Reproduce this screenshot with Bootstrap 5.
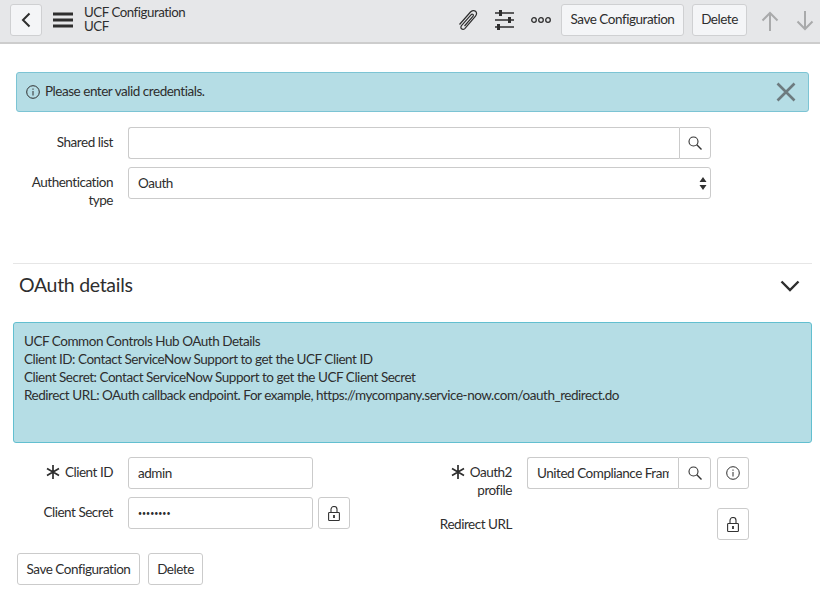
<!DOCTYPE html>
<html lang="en">
<head>
<meta charset="utf-8">
<title>UCF Configuration</title>
<link href="https://cdn.jsdelivr.net/npm/bootstrap@5.3.0/dist/css/bootstrap.min.css" rel="stylesheet">
<style>
html,body{height:593px;overflow:hidden}
body{font-family:"Lato","Liberation Sans",sans-serif;font-size:13.5px;letter-spacing:-.47px;line-height:18px;color:#2e2e2e;background:#fff}
button,input,select{letter-spacing:inherit}
.top-bar{height:44px;background:#e6e7e9;border-bottom:2px solid #cdcdcd;padding:4px 0 0 10px}
.bar-btn{height:32px;font-size:13.5px;line-height:18px;padding:0 0 2px;background:#f4f5f7;border:1px solid #cfd0d2;border-radius:3px;color:#2e2e2e;white-space:nowrap}
.back-btn{width:32px;padding:0}
.title-block{font-size:13.3px;line-height:14px;margin-left:11px;padding-top:1px;height:32px;width:266px}
.ico-plain{display:block;flex:none}
.page-body{padding:28px 11px 0 16px}
.note-bar{height:40px;background:#b5dde5;border:1px solid #7cc4d4;border-radius:3px;padding:0 11px 0 9px;margin-bottom:15px}
.note-text{padding-bottom:2px}
.field-line{display:flex;margin-bottom:8px}
.field-label{width:97px;flex:none;text-align:right;margin-right:15px;padding:6px 0 1px;line-height:18px}
.req{display:inline-block;vertical-align:-2px;margin-right:5px}
.fld{height:32px;font-size:13.5px;line-height:18px;padding:0 9px;border:1px solid #cbcbcb;border-radius:3px;color:#2e2e2e;background-color:#fff}
.fld:focus{border-color:#cbcbcb;box-shadow:none}
.fld-wide{width:583px}
.fld-dots{font-size:7px;letter-spacing:0}
.pick-select{background-image:url("data:image/svg+xml,%3Csvg xmlns='http://www.w3.org/2000/svg' width='8' height='13'%3E%3Cpath d='M4 0l3.500 5H.5zM4 13L.5 8h7z' fill='%23333'/%3E%3C/svg%3E");background-size:8px 13px;background-position:right 3px center}
.ig-btn{width:32px;height:32px;padding:0;display:flex;align-items:center;justify-content:center;border:1px solid #cbcbcb;border-radius:3px;background:#fff;flex:none}
.ig-search{border-left:1px solid #cbcbcb}
.ig-search-b{width:33px}
.oauth-sec{margin:53px -3px 0;border-top:1px solid #e6e6e6}
.oauth-head{height:58px;padding:0 12px 16px 6px}
.oauth-title{font-size:19.5px;letter-spacing:-.3px;line-height:24px;margin:0;font-weight:400}
.chev-ico{margin-top:1px}
.info-panel{height:121px;background:#b5dde5;border:1px solid #62bfd0;border-radius:3px;padding:9px 10px;margin-bottom:14px}
.two-col{display:grid;grid-template-columns:399px 1fr}
.w-secret{width:185px}
.w-prof{width:151px}
.gap-l{margin-left:5px}
.gap-i{margin-left:6px}
.foot-btn{height:32px;font-size:13.5px;line-height:18px;padding:0;background:#fff;border:1px solid #cbcbcb;border-radius:3px;color:#2e2e2e;white-space:nowrap}
.redir{padding-top:7px}
.foot-row{margin:5px 0 0 1px}
</style>
</head>
<body>
<header class="top-bar d-flex">
  <button class="bar-btn back-btn d-flex align-items-center justify-content-center" aria-label="Back"><svg width="10" height="16" viewBox="0 0 10 16"><path d="M8.500 1.500 2 8l6.500 6.500" fill="none" stroke="#2e2e2e" stroke-width="2"/></svg></button>
  <svg class="ico-plain" style="margin:7px 0 0 11px" width="20" height="18" viewBox="0 0 20 18"><path d="M0 3h20M0 9h20M0 15h20" stroke="#2e2e2e" stroke-width="3"/></svg>
  <div class="title-block"><div>UCF Configuration</div><div>UCF</div></div>
  <svg class="ico-plain" style="margin:5px 0 0 107px" width="22" height="22" viewBox="0 0 22 22" fill="none" stroke="#2e2e2e" stroke-width="1.200"><path d="M2.500 15.500 13.500 3c1.500-1.700 3.700-1.900 5-.7s1.200 3.300-.2 5L8 19.300c-1 1.100-2.600 1.300-3.500.5s-.8-2.300.2-3.400L14 5.800c.6-.7 1.500-.8 2-.4s.5 1.300-.1 2L7.500 17"/></svg>
  <svg class="ico-plain" style="margin:6px 0 0 15px" width="21" height="20" viewBox="0 0 21 20"><path d="M1 3h19M1 10h19M1 17h19" stroke="#2e2e2e" stroke-width="1.500"/><rect x="5" y="0" width="3" height="6" fill="#2e2e2e"/><rect x="14" y="7" width="3" height="6" fill="#2e2e2e"/><rect x="3" y="14" width="3" height="6" fill="#2e2e2e"/></svg>
  <svg class="ico-plain" style="margin:12px 0 0 16px" width="20" height="8" viewBox="0 0 20 8" fill="none" stroke="#2e2e2e" stroke-width="1.300"><circle cx="3" cy="4" r="2.300"/><circle cx="10" cy="4" r="2.300"/><circle cx="17" cy="4" r="2.300"/></svg>
  <button class="bar-btn" style="margin-left:10px;width:123px">Save Configuration</button>
  <button class="bar-btn" style="margin-left:8px;width:55px">Delete</button>
  <svg class="ico-plain" style="margin:7px 0 0 14px" width="18" height="20" viewBox="0 0 18 20" fill="none" stroke="#a9aaab" stroke-width="2"><path d="M9 20V2M1.500 9.500 9 2l7.500 7.500"/></svg>
  <svg class="ico-plain" style="margin:7px 0 0 17px" width="18" height="20" viewBox="0 0 18 20" fill="none" stroke="#a9aaab" stroke-width="2"><path d="M9 0v18M1.500 10.500 9 18l7.500-7.500"/></svg>
</header>

<main class="page-body">
  <div class="note-bar d-flex align-items-center">
    <svg class="ico-plain" style="margin-right:5px" width="14" height="14" viewBox="0 0 14 14" fill="none" stroke="#2e2e2e"><circle cx="7" cy="7" r="6.300"/><path d="M7 6v4.500M7 3.500v1.300"/></svg>
    <span class="flex-grow-1 note-text">Please enter valid credentials.</span>
    <svg class="ico-plain" style="margin-right:1px" width="20" height="20" viewBox="0 0 20 20"><path d="M1.500 1.500l17 17M18.500 1.500l-17 17" stroke="#6d7b7f" stroke-width="2.600"/></svg>
  </div>

  <div class="field-line">
    <label class="field-label">Shared list</label>
    <div class="d-flex fld-wide">
      <input class="form-control fld rounded-end-0 border-end-0" type="text">
      <span class="ig-btn ig-search rounded-start-0"><svg width="14" height="14" viewBox="0 0 14 14" fill="none" stroke="#333" stroke-width="1.100"><circle cx="5.500" cy="5.500" r="4.500"/><path d="M8.800 8.800 13.500 13.500" stroke-width="1.400"/></svg></span>
    </div>
  </div>
  <div class="field-line">
    <label class="field-label">Authentication type</label>
    <select class="form-select fld fld-wide pick-select"><option>Oauth</option></select>
  </div>

  <section class="oauth-sec">
    <div class="oauth-head d-flex align-items-center justify-content-between">
      <h2 class="oauth-title">OAuth details</h2>
      <svg class="chev-ico" width="20" height="12" viewBox="0 0 20 12" fill="none" stroke="#2e2e2e" stroke-width="2.400"><path d="M1.500 1.500 10 10l8.500-8.500"/></svg>
    </div>
    <div class="info-panel">
      <div>UCF Common Controls Hub OAuth Details</div>
      <div>Client ID: Contact ServiceNow Support to get the UCF Client ID</div>
      <div>Client Secret: Contact ServiceNow Support to get the UCF Client Secret</div>
      <div>Redirect URL: OAuth callback endpoint. For example, https://mycompany.service-now.com/oauth_redirect.do</div>
    </div>
  </section>

  <div class="two-col">
    <div>
      <div class="field-line">
        <label class="field-label"><svg class="req" width="14" height="14" viewBox="0 0 14 14" stroke="#2e2e2e" stroke-width="1.700"><path d="M7 0v14M1 3.500l12 7M13 3.500l-12 7"/></svg>Client ID</label>
        <input class="form-control fld w-secret" type="text" value="admin">
      </div>
      <div class="field-line">
        <label class="field-label">Client Secret</label>
        <input class="form-control fld fld-dots w-secret" type="password" value="password">
        <span class="ig-btn gap-l"><svg width="12" height="15" viewBox="0 0 12 15" fill="none" stroke="#333" stroke-width="1.100"><rect x=".6" y="6.500" width="10.800" height="8" rx=".8"/><path d="M3 6.500V3.500a3 3 0 0 1 6 0v3"/><path d="M6 9v3" stroke-width="1.800"/></svg></span>
      </div>
    </div>
    <div>
      <div class="field-line">
        <label class="field-label"><svg class="req" width="14" height="14" viewBox="0 0 14 14" stroke="#2e2e2e" stroke-width="1.700"><path d="M7 0v14M1 3.500l12 7M13 3.500l-12 7"/></svg>Oauth2 profile</label>
        <div class="d-flex">
          <input class="form-control fld w-prof rounded-end-0 border-end-0" type="text" value="United Compliance Framework">
          <span class="ig-btn ig-search ig-search-b rounded-start-0"><svg width="14" height="14" viewBox="0 0 14 14" fill="none" stroke="#333" stroke-width="1.100"><circle cx="5.500" cy="5.500" r="4.500"/><path d="M8.800 8.800 13.500 13.500" stroke-width="1.400"/></svg></span>
        </div>
        <span class="ig-btn gap-i"><svg width="14" height="14" viewBox="0 0 14 14" fill="none" stroke="#2e2e2e"><circle cx="7" cy="7" r="6.300"/><path d="M7 6v4.500M7 3.500v1.300"/></svg></span>
      </div>
      <div class="field-line">
        <label class="field-label redir">Redirect URL</label>
        <span class="ig-btn" style="margin-left:190px"><svg width="12" height="15" viewBox="0 0 12 15" fill="none" stroke="#333" stroke-width="1.100"><rect x=".6" y="6.500" width="10.800" height="8" rx=".8"/><path d="M3 6.500V3.500a3 3 0 0 1 6 0v3"/><path d="M6 9v3" stroke-width="1.800"/></svg></span>
      </div>
    </div>
  </div>

  <div class="d-flex gap-2 foot-row">
    <button class="foot-btn" style="width:123px">Save Configuration</button>
    <button class="foot-btn" style="width:55px">Delete</button>
  </div>
</main>
<script src="https://cdn.jsdelivr.net/npm/bootstrap@5.3.0/dist/js/bootstrap.bundle.min.js"></script>
</body>
</html>
